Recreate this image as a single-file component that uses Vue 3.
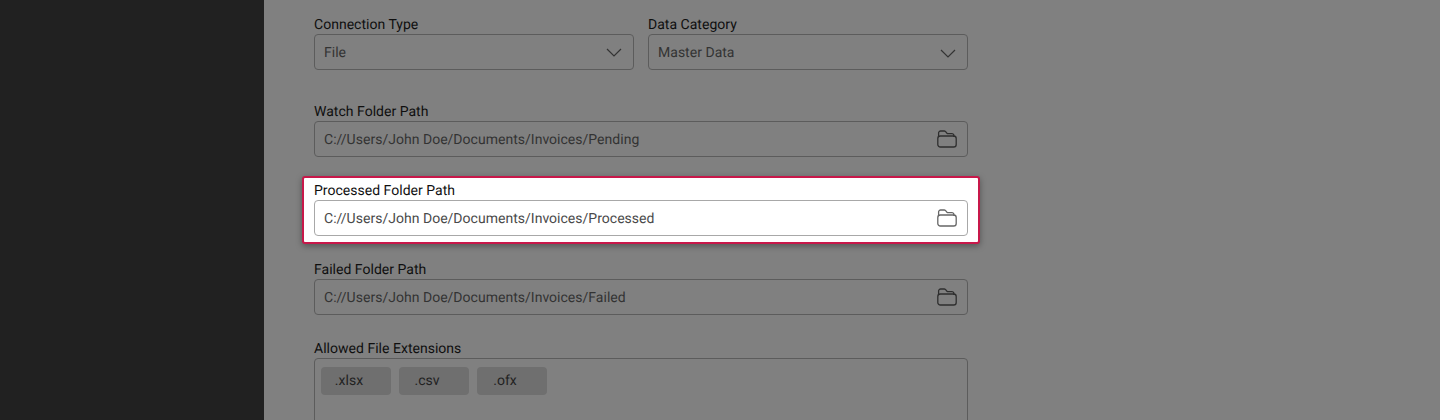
<script setup>
const fields = [
  { label: 'Watch Folder Path', value: 'C://Users/John Doe/Documents/Invoices/Pending' },
  { label: 'Processed Folder Path', value: 'C://Users/John Doe/Documents/Invoices/Processed', active: true },
  { label: 'Failed Folder Path', value: 'C://Users/John Doe/Documents/Invoices/Failed' }
]
const extensions = ['.xlsx', '.csv', '.ofx']
</script>

<template>
  <div class="page">
    <aside class="sidebar"></aside>
    <main class="main">
      <div class="form">
        <div class="row">
          <div class="field">
            <div class="label">Connection Type</div>
            <div class="input"><span class="value">File</span>
              <svg class="chev" width="16" height="9" viewBox="0 0 16 9"><path d="M1 1l7 7 7-7" fill="none" stroke="currentColor" stroke-width="1.2"/></svg>
            </div>
          </div>
          <div class="field">
            <div class="label">Data Category</div>
            <div class="input"><span class="value">Master Data</span>
              <svg class="chev low" width="16" height="9" viewBox="0 0 16 9"><path d="M1 1l7 7 7-7" fill="none" stroke="currentColor" stroke-width="1.2"/></svg>
            </div>
          </div>
        </div>
        <div v-for="f in fields" :key="f.label" class="field path" :class="{ active: f.active }">
          <div class="label">{{ f.label }}</div>
          <div class="input"><span class="value">{{ f.value }}</span>
            <svg class="folder" width="20" height="18" viewBox="0 0 20 18" fill="none" stroke="currentColor" stroke-width="1.3" stroke-linejoin="round">
              <path d="M1.6 7V3a2 2 0 0 1 2-2h3.6c.6 0 1 .2 1.4.6l1.4 1.6c.3.3.7.5 1.1.5h3.8a2 2 0 0 1 2 2V7"/>
              <rect x="0.8" y="6" width="18.4" height="11" rx="2.6"/>
            </svg>
          </div>
        </div>
        <div class="field path">
          <div class="label">Allowed File Extensions</div>
          <div class="box">
            <span v-for="e in extensions" :key="e" class="chip">{{ e }}</span>
          </div>
        </div>
      </div>
    </main>
  </div>
</template>

<style>
html, body { margin: 0; background: #808080; }
</style>

<style scoped>
.page {
  display: flex;
  height: 420px;
  overflow: hidden;
  font-family: Roboto, "Liberation Sans", sans-serif;
  font-size: 14px;
  letter-spacing: 0.02px;
  text-rendering: geometricPrecision;
}
.sidebar { width: 264px; flex: none; background: #212121; }
.main {
  flex: 1;
  padding: 16px 0 0 50px;
  background: #808080;
}
.form { width: 654px; display: flex; flex-direction: column; gap: 25px; }
.row { display: flex; gap: 14px; margin-bottom: 8px; }
.row .field { width: 320px; }
.label { height: 16px; line-height: 18px; margin-bottom: 2px; color: #0f0f0f; }
.input {
  box-sizing: border-box;
  height: 36px;
  border: 1px solid #5c5c5c;
  border-radius: 4px;
  display: flex;
  align-items: center;
  justify-content: space-between;
  padding: 0 10px 0 9px;
  color: #333;
}
.value { padding-top: 2px; }
.chev { color: #333; margin-right: 1px; }
.chev.low { margin-top: 3px; }
.folder { color: #2e2e2e; }
.path.active {
  position: relative;
  z-index: 1;
  margin: -6px -12px -8px;
  padding: 4px 10px 6px;
  background: #fff;
  border: 2px solid #c8184a;
  border-radius: 3px;
  box-shadow: 0 2px 6px rgba(0, 0, 0, 0.35);
}
.active .label { color: #111; }
.active .input { border-color: #a8a8a8; color: #4a4a4a; }
.active .folder { color: #666; }
.box {
  box-sizing: border-box;
  height: 120px;
  border: 1px solid #5c5c5c;
  border-radius: 4px;
  padding: 8px 6px;
  display: flex;
  align-items: flex-start;
  gap: 8px;
}
.chip {
  width: 70px;
  height: 28px;
  box-sizing: border-box;
  padding-right: 14px;
  text-align: center;
  line-height: 28px;
  background: #6f6f6f;
  border-radius: 4px;
  color: #222;
}
</style>
